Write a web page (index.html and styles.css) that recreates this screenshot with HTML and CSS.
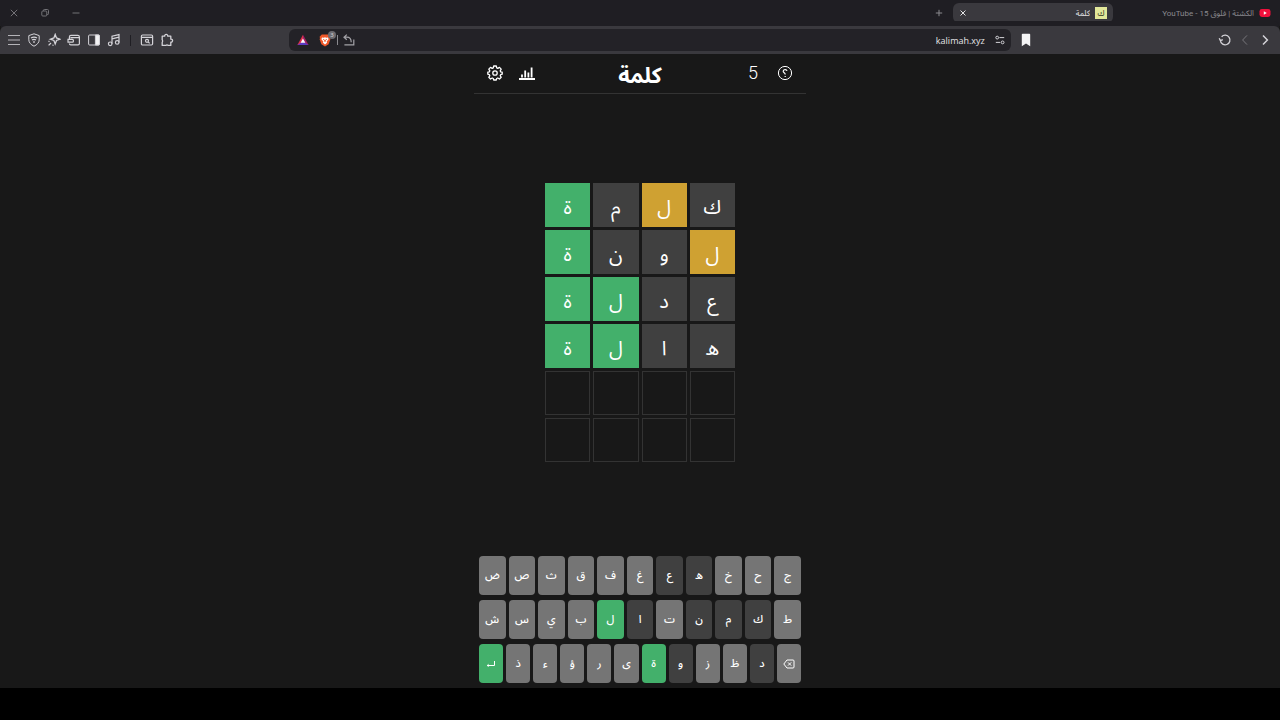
FILE: index.html
```
<!DOCTYPE html>
<html lang="ar" dir="rtl">
<head>
    <meta charset="UTF-8">
    <title>كلمة</title>
    <meta name="viewport" content="width=device-width, initial-scale=1.0">
    <link rel="stylesheet" href="styles.css">
</head>
<body>
    <div class="tab-strip">
        <div class="tab">
            <svg class="favicon" viewBox="0 0 12 12"><rect x="0.5" y="2" width="11" height="8" rx="2.4" fill="#f0103c"/><path d="M4.8 4.3v3.4L7.8 6z" fill="#fff"/></svg>
            <span class="tab-title">الكشتة | فلوق 15 - YouTube</span>
        </div>
        <div class="tab tab-active">
            <span class="favicon favicon-word">ك</span>
            <span class="tab-title">كلمة</span>
            <button class="tab-close" aria-label="إغلاق"><svg viewBox="0 0 14 14"><path d="M4.5 4.5l5 5M9.5 4.5l-5 5"/></svg></button>
        </div>
        <button class="new-tab" aria-label="علامة تبويب جديدة"><svg viewBox="0 0 14 14"><path d="M7 3.8v6.4M3.8 7h6.4"/></svg></button>
        <div class="window-controls">
            <button aria-label="تصغير"><svg viewBox="0 0 14 14"><path d="M3.5 7h7"/></svg></button>
            <button aria-label="استعادة"><svg viewBox="0 0 14 14"><rect x="3.8" y="5" width="5" height="5" rx="1"/><path d="M5.5 5V4.3q0-.8.8-.8h3.2q1 0 1 1v3.2q0 .8-.8.8h-.9"/></svg></button>
            <button aria-label="إغلاق النافذة"><svg viewBox="0 0 14 14"><path d="M3.8 3.8l6.4 6.4M10.2 3.8l-6.4 6.4"/></svg></button>
        </div>
    </div>

    <div class="toolbar">
        <div class="tool-group">
            <button aria-label="رجوع"><svg viewBox="0 0 14 14"><path d="M5 2.4L9.4 7 5 11.6" stroke-width="1.5"/></svg></button>
            <button class="dim" aria-label="تقدم"><svg viewBox="0 0 14 14"><path d="M9 2.4L4.6 7 9 11.6"/></svg></button>
            <button aria-label="تحديث"><svg viewBox="0 0 14 14" stroke-width="1.3"><path d="M2.4 7.6A4.8 4.8 0 1 0 3.6 3.8M1.2 5.2l1.2 2.4 2.4-1"/></svg></button>
        </div>
        <div class="space-start"></div>
        <div class="tool-group">
            <button aria-label="إشارة مرجعية"><svg viewBox="0 0 14 14"><path d="M2.8 1.6q0-.8.8-.8h6.8q.8 0 .8.8v11.6L7 10.4l-4.2 2.8z" fill="#f4f4f5" stroke="none"/></svg></button>
        </div>
        <div class="address-bar">
            <button aria-label="معلومات الموقع"><svg viewBox="0 0 14 14"><circle cx="4.2" cy="4.6" r="1.4"/><path d="M6.4 4.6h4.8M2.8 9.4h4.4"/><circle cx="9.6" cy="9.4" r="1.4"/></svg></button>
            <input class="url" type="text" value="kalimah.xyz" dir="ltr" aria-label="العنوان">
            <button class="share" aria-label="مشاركة"><svg viewBox="0 0 14 14" stroke-width="1.2"><path d="M4.8 1.6L2 4.2l2.8 2.6M2.2 4.2h2.6q4.400 0 4.400 5M2.400 11.800h9.400V6.400"/></svg></button>
            <span class="bar-line"></span>
            <button class="shields" aria-label="الدروع">
                <svg viewBox="0 0 14 14"><path d="M3.8 1.6h6.4l2.2 2.2-.4 1.4.4 1-1.8 5L7 13.4l-3.6-2.2-1.8-5 .4-1L1.6 3.8z" fill="#f0592a" stroke="none"/><path d="M4 4.4l1.8.4L7 4.3l1.2.5 1.8-.4.6 1.8-1.9 2.2.3 1.3L7 11.4 5 9.7l.3-1.3-1.9-2.2z" fill="#fff" stroke="none"/><path d="M5 6.2l1.4.7L7 8.8l.6-1.9L9 6.2" stroke="#f0592a" stroke-width=".8"/></svg>
                <span class="badge">3</span>
            </button>
            <button class="rewards" aria-label="المكافآت"><svg viewBox="0 0 14 14"><path d="M7 1.8L1.4 12H7z" fill="#e0304c" stroke="none"/><path d="M7 1.8L12.6 12H7z" fill="#9e1f63" stroke="none"/><path d="M1.4 12L7 8.6l5.6 3.4z" fill="#5b3bc4" stroke="none"/><path d="M7 5.6L4.6 9.8h4.8z" fill="#fff" stroke="none"/></svg></button>
        </div>
        <div class="space-end"></div>
        <div class="tool-group">
            <button aria-label="الإضافات"><svg viewBox="0 0 14 14"><path d="M2.2 3.2h2.5c-.4-2.4 3.4-2.4 3 0h3.1v3c2.4-.4 2.4 3.2 0 2.9v3.3H8.2q-1.2-1-2.4 0H2.2V9.3q1-1.3 0-2.6z" stroke-width="1.3" stroke-linejoin="round"/></svg></button>
            <button aria-label="بحث في الصفحة"><svg viewBox="0 0 14 14" stroke-width="1.2"><rect x="1.4" y="2" width="11.2" height="10" rx="1.2"/><path d="M1.6 4.4h10.8M8.3 9l1.3 1.3"/><circle cx="7" cy="7.8" r="1.5"/></svg></button>
            <span class="tool-line"></span>
            <button aria-label="الوسائط"><svg viewBox="0 0 14 14" stroke-width="1.2"><circle cx="3.2" cy="10.8" r="1.8"/><circle cx="10.2" cy="9.4" r="1.8"/><path d="M5 10.8V3.2l7-1.6v7.8M5 5.8l7-1.6"/></svg></button>
            <button aria-label="الشريط الجانبي"><svg viewBox="0 0 14 14"><rect x="1.6" y="2" width="10.8" height="10" rx="1"/><path d="M8.4 2h3.2q.8 0 .8.8v8.4q0 .8-.8.8H8.4z" fill="#f4f4f5"/></svg></button>
            <button aria-label="المحفظة"><svg viewBox="0 0 14 14" stroke-width="1.2"><path d="M2.4 6V4q0-1.6 1.6-1.6h6.8q1.6 0 1.6 1.6v6.4q0 1.4-1.4 1.4H3.8q-1.4 0-1.4-1.4M3.4 4.6h9M1 6.4h4.4q1 0 1 1v.8q0 1-1 1H1z"/></svg></button>
            <button aria-label="المساعد"><svg viewBox="0 0 14 14"><path d="M8.2 1.4l1.3 3.5L13 6.2 9.5 7.5 8.2 11 6.9 7.5 3.4 6.2l3.5-1.3zM1.6 12.4L4 10M1.6 8.8l.8-.8M5.6 12.6l.8-.8" stroke-width="1.3"/></svg></button>
            <button aria-label="الحماية"><svg viewBox="0 0 14 14"><path d="M7 .8l5.2 1.8v4.2c0 2.8-2.2 5-5.2 6.4-3-1.4-5.2-3.6-5.2-6.4V2.6z"/><path d="M4 5q3-1.8 6 0M5 7q2-1.4 4 0M6.2 9h1.6" stroke-width="1.3"/></svg></button>
            <button class="menu" aria-label="القائمة"><svg viewBox="0 0 14 14"><path d="M1 2.5h12M1 7h12M1 11.5h12"/></svg></button>
        </div>
    </div>

    <main class="game">
        <header class="game-header">
            <div class="header-side">
                <button aria-label="مساعدة"><svg viewBox="0 0 16 16"><circle cx="8" cy="8" r="6.6"/><path d="M10 5.8C9.6 4 6.2 4.2 6.2 6.2c0 1.6 2 1.5 2 3.2M8.2 11v.9" stroke-width="1.2"/></svg></button>
                <button class="length" aria-label="عدد الحروف">5</button>
            </div>
            <h1>كلمة</h1>
            <div class="header-side header-end">
                <button aria-label="إحصائيات"><svg viewBox="0 0 16 16"><path d="M0 14h16" stroke-width="2"/><path d="M3 12.5V9.5M6.2 12.5V5.5M9.4 12.5V7.5M12.6 12.5V2.5" stroke-width="1.8"/></svg></button>
                <button aria-label="إعدادات"><svg viewBox="0 0 16 16" stroke-width="1.3" stroke-linejoin="round"><circle cx="8" cy="8" r="2.2"/><path d="M6.7 1h2.6l.4 1.9 1.1.5 1.7-1 1.7 1.7-1 1.7.5 1.1 1.5.3v2l-1.5.4-.5 1.1 1 1.6-1.7 1.7-1.7-1-1.1.5L9.3 15H6.7l-.4-1.5-1.1-.5-1.7 1-1.7-1.7 1-1.6-.5-1.1L.8 9.2v-2l1.5-.3.5-1.1-1-1.7 1.7-1.7 1.7 1 1.1-.5z"/></svg></button>
            </div>
        </header>

        <div class="board-area">
            <div class="board">
                <div class="tile absent">ك</div>
                <div class="tile present">ل</div>
                <div class="tile absent">م</div>
                <div class="tile correct">ة</div>

                <div class="tile present">ل</div>
                <div class="tile absent">و</div>
                <div class="tile absent">ن</div>
                <div class="tile correct">ة</div>

                <div class="tile absent">ع</div>
                <div class="tile absent">د</div>
                <div class="tile correct">ل</div>
                <div class="tile correct">ة</div>

                <div class="tile absent">ه</div>
                <div class="tile absent">ا</div>
                <div class="tile correct">ل</div>
                <div class="tile correct">ة</div>

                <div class="tile"></div>
                <div class="tile"></div>
                <div class="tile"></div>
                <div class="tile"></div>

                <div class="tile"></div>
                <div class="tile"></div>
                <div class="tile"></div>
                <div class="tile"></div>
            </div>
        </div>

        <div class="keyboard">
            <div class="key-row">
                <button class="key">ج</button>
                <button class="key">ح</button>
                <button class="key">خ</button>
                <button class="key absent">ه</button>
                <button class="key absent">ع</button>
                <button class="key">غ</button>
                <button class="key">ف</button>
                <button class="key">ق</button>
                <button class="key">ث</button>
                <button class="key">ص</button>
                <button class="key">ض</button>
            </div>
            <div class="key-row">
                <button class="key">ط</button>
                <button class="key absent">ك</button>
                <button class="key absent">م</button>
                <button class="key absent">ن</button>
                <button class="key">ت</button>
                <button class="key absent">ا</button>
                <button class="key correct">ل</button>
                <button class="key">ب</button>
                <button class="key">ي</button>
                <button class="key">س</button>
                <button class="key">ش</button>
            </div>
            <div class="key-row">
                <button class="key" aria-label="حذف"><svg viewBox="0 0 12 12"><path d="M4 2h6q1 0 1 1v6q0 1-1 1H4L.8 6zM5 4.4l3.2 3.2M8.2 4.4L5 7.6"/></svg></button>
                <button class="key absent">د</button>
                <button class="key">ظ</button>
                <button class="key">ز</button>
                <button class="key absent">و</button>
                <button class="key correct">ة</button>
                <button class="key">ى</button>
                <button class="key">ر</button>
                <button class="key">ؤ</button>
                <button class="key">ء</button>
                <button class="key">ذ</button>
                <button class="key correct" aria-label="إدخال"><svg viewBox="0 0 12 12"><path d="M9.5 3v4.5H2.2M3.6 6.3L2.2 7.5l1.4 1"/></svg></button>
            </div>
        </div>
    </main>
    <div class="bottom-strip"></div>
</body>
</html>
```
FILE: styles.css
```
* {
    box-sizing: border-box;
}

body {
    margin: 0;
    min-height: 100vh;
    display: flex;
    flex-direction: column;
    background-color: #181818;
    color: #ffffff;
    font-family: "Noto Sans", "Noto Sans Arabic", sans-serif;
}

button {
    font-family: inherit;
    color: inherit;
    background: none;
    border: none;
    padding: 0;
    cursor: pointer;
}

svg {
    display: block;
    fill: none;
    stroke: currentColor;
}

/* browser tabs */
.tab-strip {
    display: flex;
    align-items: center;
    gap: 4px;
    height: 26px;
    padding: 0 3px;
    background-color: #1f1e23;
    color: #8a898e;
    font-size: 8px;
}

.tab {
    display: flex;
    align-items: center;
    gap: 5px;
    width: 160px;
    height: 20px;
    padding: 0 6px;
    border-radius: 6px;
}

.tab-active {
    background-color: #3a393e;
    color: #e4e4e6;
}

.tab-title {
    flex: 1;
    white-space: nowrap;
    overflow: hidden;
    font-family: Roboto, "Noto Sans Arabic", sans-serif;
}

.favicon {
    width: 12px;
    height: 12px;
    stroke: none;
}

.favicon-word {
    background-color: #e2e89a;
    color: #33331c;
    line-height: 12px;
    text-align: center;
}

.tab-strip button svg {
    width: 14px;
    height: 14px;
}

.tab-close {
    margin-left: -3px;
}

.new-tab {
    margin-right: 3px;
}

.window-controls {
    display: flex;
    gap: 17px;
    margin-right: auto;
    padding-left: 4px;
    color: #737277;
}

/* browser toolbar */
.toolbar {
    display: flex;
    align-items: center;
    height: 28px;
    padding: 0 5px 0 4px;
    background-color: #3a393e;
    border-radius: 6px 6px 0 0;
    box-shadow: 0 -6px 0 -1px #1f1e23;
    color: #d4d3d8;
}

.tool-group {
    display: flex;
    align-items: center;
}

.toolbar button {
    width: 20px;
    height: 20px;
    display: flex;
    align-items: center;
    justify-content: center;
}

.toolbar svg {
    width: 14px;
    height: 14px;
}

.toolbar .dim {
    color: #77767b;
}

.toolbar .menu {
    color: #b4b3b8;
}

.space-start {
    flex: 8;
}

.space-end {
    flex: 5;
}

.tool-line {
    width: 1px;
    height: 11px;
    margin: 0 6px;
    background-color: #1f1e23;
}

.address-bar {
    display: flex;
    align-items: center;
    flex: 32;
    height: 22px;
    margin-right: 5px;
    padding: 0 1px 0 4px;
    border-radius: 6px;
    background-color: #232227;
}

.url {
    flex: 1;
    min-width: 0;
    padding: 0 5px;
    border: none;
    outline: none;
    background: none;
    color: #e4e4e6;
    font-family: "Open Sans", sans-serif;
    font-size: 9px;
    text-align: right;
}

.toolbar .share {
    color: #a3a2a7;
}

.bar-line {
    width: 1px;
    height: 10px;
    margin: 0 1px 0 2px;
    background-color: #8a898e;
}

.shields {
    position: relative;
}

.rewards {
    margin-right: 2px;
}

.badge {
    position: absolute;
    top: 1px;
    right: -1px;
    width: 8px;
    height: 8px;
    border-radius: 4px;
    background-color: #6c6b70;
    font-size: 6px;
    line-height: 8px;
}

/* game */
.game {
    flex: 1;
    display: flex;
    flex-direction: column;
    width: 100%;
    max-width: 332px;
    margin: 0 auto;
}

.game-header {
    display: flex;
    align-items: center;
    height: 40px;
    padding: 0 13px;
    border-bottom: 1px solid #333333;
}

.game-header h1 {
    margin: 0;
    font-size: 22px;
    line-height: 38px;
    font-weight: bold;
}

.header-side {
    flex: 1;
    display: flex;
    align-items: center;
    gap: 16px;
    padding-bottom: 2px;
}

.header-end {
    justify-content: flex-end;
}

.header-side button {
    width: 16px;
}

.header-side svg {
    width: 16px;
    height: 16px;
}

.header-side .length {
    font-family: Roboto, sans-serif;
    font-size: 18px;
    font-weight: 300;
}

.board-area {
    flex: 1;
    display: flex;
    align-items: center;
    justify-content: center;
}

.board {
    display: grid;
    grid-template-columns: repeat(4, 1fr);
    grid-auto-rows: 44px;
    gap: 3px;
    width: 190px;
}

.tile {
    display: flex;
    align-items: center;
    justify-content: center;
    padding-top: 3px;
    border: 1px solid #333333;
    font-size: 20px;
    line-height: 28px;
}

.key {
    flex: 1;
    display: flex;
    align-items: center;
    justify-content: center;
    height: 39px;
    border-radius: 4px;
    background-color: #757575;
    font-size: 11px;
    font-weight: 500;
}

.tile.absent,
.key.absent {
    background-color: #404040;
    border-color: #404040;
}

.tile.present {
    background-color: #cfa132;
    border-color: #cfa132;
}

.tile.correct,
.key.correct {
    background-color: #43b06b;
    border-color: #43b06b;
}

.keyboard {
    display: flex;
    flex-direction: column;
    gap: 5px;
    padding: 5px;
}

.key-row {
    display: flex;
    gap: 3px;
}

.key svg {
    width: 12px;
    height: 12px;
}

.bottom-strip {
    height: 32px;
    background-color: #000000;
}
```
